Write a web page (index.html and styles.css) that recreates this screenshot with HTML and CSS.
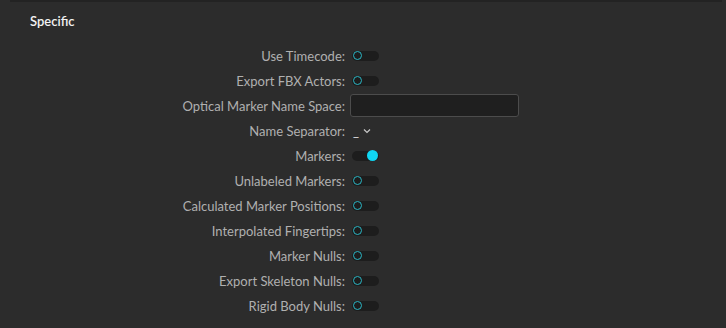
FILE: index.html
```html
<!DOCTYPE html>
<html lang="en">
<head>
    <meta charset="UTF-8">
    <meta name="viewport" content="width=device-width, initial-scale=1.0">
    <title>Specific</title>
    <link rel="stylesheet" href="styles.css">
</head>
<body>
    <div class="top-edge"></div>
    <div class="panel">
        <h2 class="panel-title">Specific</h2>
        <div class="form">
            <label>Use Timecode:</label>
            <span class="toggle"><span class="knob"></span></span>

            <label>Export FBX Actors:</label>
            <span class="toggle"><span class="knob"></span></span>

            <label>Optical Marker Name Space:</label>
            <input type="text" class="text-field">

            <label>Name Separator:</label>
            <span class="select">_ <svg class="chevron" width="8" height="6" viewBox="0 0 8 6"><path d="M1 1.5 L4 4.5 L7 1.5" fill="none" stroke="#c8c8c8" stroke-width="1.2"/></svg></span>

            <label>Markers:</label>
            <span class="toggle on"><span class="knob"></span></span>

            <label>Unlabeled Markers:</label>
            <span class="toggle"><span class="knob"></span></span>

            <label>Calculated Marker Positions:</label>
            <span class="toggle"><span class="knob"></span></span>

            <label>Interpolated Fingertips:</label>
            <span class="toggle"><span class="knob"></span></span>

            <label>Marker Nulls:</label>
            <span class="toggle"><span class="knob"></span></span>

            <label>Export Skeleton Nulls:</label>
            <span class="toggle"><span class="knob"></span></span>

            <label>Rigid Body Nulls:</label>
            <span class="toggle"><span class="knob"></span></span>
        </div>
    </div>
</body>
</html>
```

FILE: styles.css
```css
body {
    font-family: Lato, "Liberation Sans", sans-serif;
    background-color: #2c2c2c;
    margin: 0;
    padding: 0;
}
.top-edge {
    height: 2px;
    margin: 0 4px 0 10px;
    background: #232323;
}
.panel {
    padding: 0 0 0 30px;
}
.panel-title {
    margin: 0;
    padding-top: 10px;
    height: 31px;
    font-size: 13px;
    font-weight: 600;
    color: #f2f2f2;
    line-height: 18px;
}
.form {
    display: grid;
    grid-template-columns: 315px auto;
    grid-auto-rows: 25px;
    column-gap: 5px;
    align-items: center;
    justify-items: start;
}
.form label {
    justify-self: end;
    font-size: 13px;
    color: #b0b0b0;
}
.toggle {
    position: relative;
    width: 27px;
    height: 10px;
    margin-left: 2px;
    border-radius: 5px;
    background: #1d1d1d;
}
.knob {
    position: absolute;
    left: 1px;
    top: 0;
    width: 7px;
    height: 7px;
    border: 1.5px solid #2bb6c4;
    border-radius: 50%;
}
.toggle.on .knob {
    left: auto;
    right: 1px;
    top: -0.5px;
    width: 11px;
    height: 11px;
    border: none;
    background: #10d6f2;
}
.text-field {
    width: 169px;
    height: 23px;
    padding: 0;
    box-sizing: border-box;
    border: 1px solid #4c4c4c;
    border-radius: 3px;
    background: #1f1f1f;
    color: #ddd;
}
.select {
    margin-left: 3px;
    font-size: 13px;
    color: #e0e0e0;
    display: flex;
    align-items: center;
    gap: 4px;
}
.chevron {
    margin-top: 1px;
}
```
